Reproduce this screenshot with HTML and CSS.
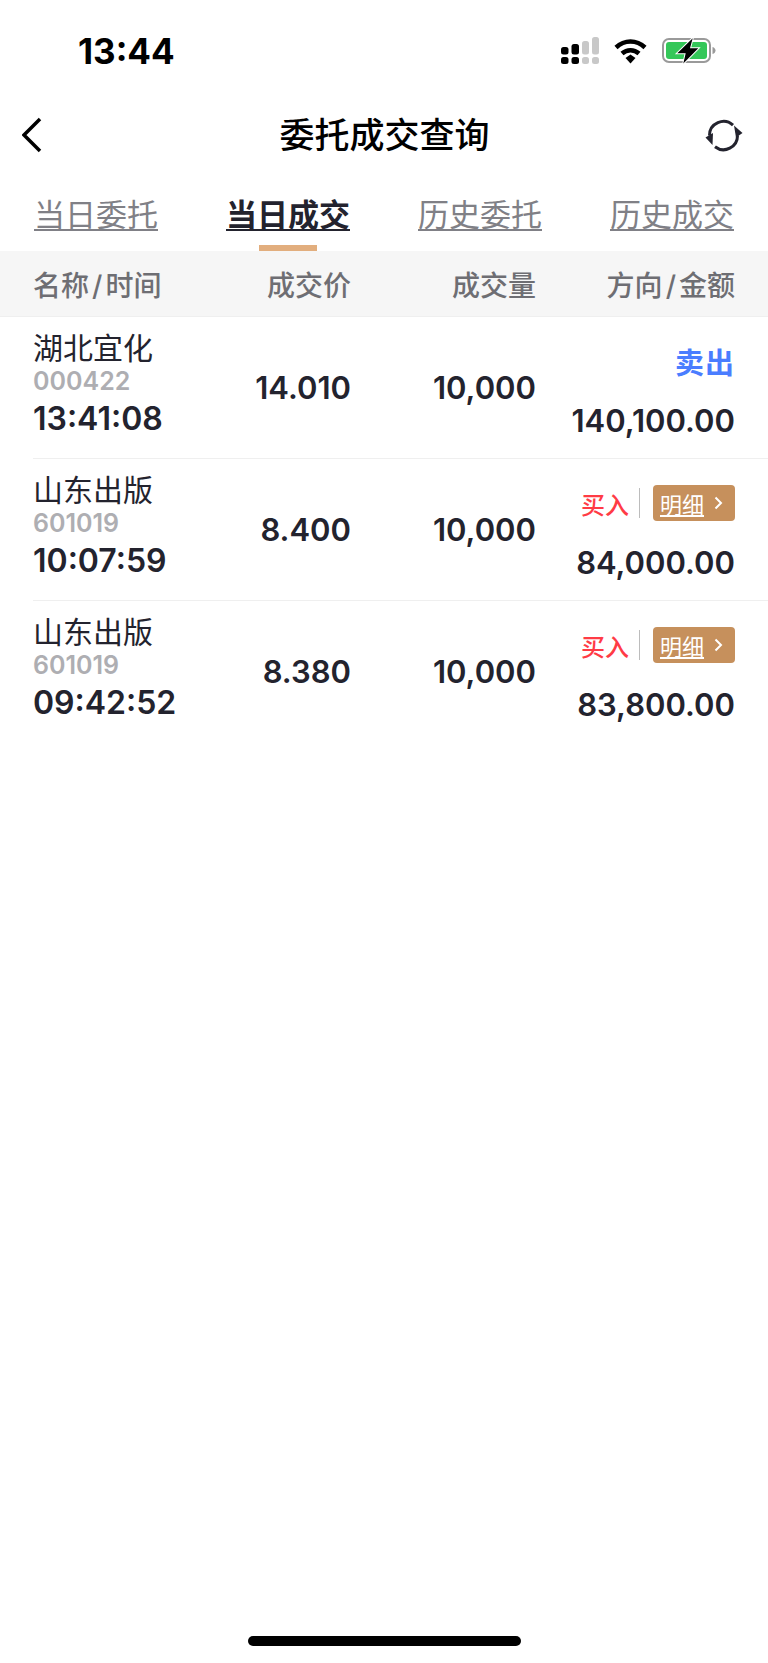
FILE: index.html
```html
<!DOCTYPE html>
<html lang="zh-CN">
<head>
    <meta charset="UTF-8">
    <meta name="viewport" content="width=device-width, initial-scale=1.0">
    <title>委托成交查询</title>
    <link rel="stylesheet" href="styles.css">
</head>
<body>
    <div class="page">
        <!-- Status bar -->
        <div class="status-bar">
            <span class="clock">13:44</span>
            <div class="status-icons">
                <svg class="signal" width="38" height="27" viewBox="0 0 38 27">
                    <g fill="#000">
                        <rect x="0" y="10" width="7.5" height="7.5" rx="2.5"/>
                        <rect x="0" y="20" width="7.5" height="7" rx="2.5"/>
                        <rect x="10.5" y="7" width="7.5" height="10.5" rx="2.5"/>
                        <rect x="10.5" y="20" width="7.5" height="7" rx="2.5"/>
                    </g>
                    <g fill="#c8c8c8">
                        <rect x="21" y="4" width="7" height="13.5" rx="2.5"/>
                        <rect x="21" y="20" width="7" height="7" rx="2.5"/>
                        <rect x="31" y="0" width="7" height="17.5" rx="2.5"/>
                        <rect x="31" y="20" width="7" height="7" rx="2.5"/>
                    </g>
                </svg>
                <svg class="wifi" width="33" height="26" viewBox="0 0 33 26">
                    <path d="M2 9.5C10.500 1.500 22.500 1.500 31 9.500" fill="none" stroke="#000" stroke-width="4.500"/>
                    <path d="M8 15.500C13 11 20 11 25 15.500" fill="none" stroke="#000" stroke-width="4.500"/>
                    <path d="M11.500 20L16.500 16.500L21.500 20L16.500 25.500Z" fill="#000"/>
                </svg>
                <svg class="battery" width="54" height="27" viewBox="0 0 54 27">
                    <rect x="1" y="2" width="47" height="23" rx="6" fill="none" stroke="#9a9a9a" stroke-width="2"/>
                    <rect x="4" y="5" width="41" height="17" rx="3" fill="#34c759"/>
                    <path d="M50.500 10C52.500 10.500 53.500 12 53.500 13.500C53.500 15 52.500 16.500 50.500 17Z" fill="#9a9a9a"/>
                    <path d="M30.700 1.300L15.300 16.300H23.700L21.300 26.500L36.300 11.300H28Z" fill="#000" stroke="#fff" stroke-width="2" paint-order="stroke"/>
                </svg>
            </div>
        </div>

        <!-- Title bar -->
        <div class="nav-bar">
            <svg class="back" width="20" height="36" viewBox="0 0 20 36">
                <path d="M18 2L2 18L18 34" fill="none" stroke="#000" stroke-width="3.500"/>
            </svg>
            <h1 class="title">委托成交查询</h1>
            <svg class="refresh" width="38" height="33" viewBox="0 0 38 33">
                <path d="M4.500 16.500A14 14 0 0 1 28 6.200" fill="none" stroke="#23232e" stroke-width="3"/>
                <path d="M32.500 16.500A14 14 0 0 1 10 27.800" fill="none" stroke="#23232e" stroke-width="3"/>
                <path d="M29 6.500L37.500 14L31 18.500Z" fill="#23232e"/>
                <path d="M0.500 18.500L8 14L7.500 26Z" fill="#23232e"/>
            </svg>
        </div>

        <!-- Tabs -->
        <div class="tabs">
            <div class="tab"><span class="tab-label">当日委托</span></div>
            <div class="tab active"><span class="tab-label">当日成交</span><span class="tab-bar"></span></div>
            <div class="tab"><span class="tab-label">历史委托</span></div>
            <div class="tab"><span class="tab-label">历史成交</span></div>
        </div>

        <!-- Table head -->
        <div class="table-head grid-row">
            <span>名称<span class="slash">/</span>时间</span>
            <span class="num">成交价</span>
            <span class="num">成交量</span>
            <span class="num">方向<span class="slash">/</span>金额</span>
        </div>

        <!-- Trades -->
        <div class="trade-list">
            <div class="trade grid-row">
                <div class="stock">
                    <span class="stock-name">湖北宜化</span>
                    <span class="stock-code">000422</span>
                    <span class="stock-time">13:41:08</span>
                </div>
                <span class="value">14.010</span>
                <span class="value">10,000</span>
                <div class="side">
                    <div class="side-top"><span class="sell">卖出</span></div>
                    <span class="amount">140,100.00</span>
                </div>
            </div>
            <div class="trade grid-row">
                <div class="stock">
                    <span class="stock-name">山东出版</span>
                    <span class="stock-code">601019</span>
                    <span class="stock-time">10:07:59</span>
                </div>
                <span class="value">8.400</span>
                <span class="value">10,000</span>
                <div class="side">
                    <div class="side-top">
                        <span class="buy">买入</span>
                        <span class="side-sep"></span>
                        <span class="detail-btn"><span class="detail-text">明细</span>
                            <svg width="9" height="14" viewBox="0 0 9 14"><path d="M1.500 1.500L7 7L1.500 12.500" fill="none" stroke="#fff" stroke-width="2"/></svg>
                        </span>
                    </div>
                    <span class="amount">84,000.00</span>
                </div>
            </div>
            <div class="trade grid-row">
                <div class="stock">
                    <span class="stock-name">山东出版</span>
                    <span class="stock-code">601019</span>
                    <span class="stock-time">09:42:52</span>
                </div>
                <span class="value">8.380</span>
                <span class="value">10,000</span>
                <div class="side">
                    <div class="side-top">
                        <span class="buy">买入</span>
                        <span class="side-sep"></span>
                        <span class="detail-btn"><span class="detail-text">明细</span>
                            <svg width="9" height="14" viewBox="0 0 9 14"><path d="M1.500 1.500L7 7L1.500 12.500" fill="none" stroke="#fff" stroke-width="2"/></svg>
                        </span>
                    </div>
                    <span class="amount">83,800.00</span>
                </div>
            </div>
        </div>

        <div class="home-indicator"></div>
    </div>
</body>
</html>
```

FILE: styles.css
```css
body {
    margin: 0;
    padding: 0;
    background: #fff;
    font-family: Inter, "Noto Sans CJK SC", sans-serif;
    color: #23232e;
}
.page {
    width: 768px;
    height: 1663px;
    display: flex;
    flex-direction: column;
    overflow: hidden;
}
.status-bar {
    height: 100px;
    display: flex;
    justify-content: space-between;
    align-items: flex-start;
    padding: 0 52px 0 78px;
    box-sizing: border-box;
}
.clock {
    margin-top: 32px;
    font-size: 35px;
    line-height: 38px;
    font-weight: 700;
    color: #000;
}
.status-icons {
    display: flex;
    align-items: flex-start;
    margin-top: 37px;
}
.wifi {
    margin-left: 15px;
    margin-top: 1px;
}
.battery {
    margin-left: 15px;
}
.nav-bar {
    height: 70px;
    display: grid;
    grid-template-columns: 1fr auto 1fr;
    align-items: center;
    padding: 0 25px 0 22px;
}
.refresh {
    justify-self: end;
}
.title {
    margin: 0 0 0 4px;
    font-size: 35px;
    line-height: 46px;
    font-weight: 500;
    color: #000;
}
.tabs {
    height: 81px;
    display: flex;
    justify-content: space-between;
    padding: 0 34px;
}
.tab {
    display: flex;
    flex-direction: column;
    align-items: center;
    justify-content: flex-end;
    height: 81px;
}
.tab-label {
    font-size: 31px;
    line-height: 40px;
    margin-bottom: 16px;
    color: #808086;
    text-decoration: underline;
    text-decoration-thickness: 2px;
    text-underline-offset: 3px;
}
.tab.active .tab-label {
    font-weight: 700;
    color: #23232e;
    margin-bottom: 10px;
}
.tab-bar {
    display: block;
    width: 58px;
    height: 6px;
    background: #e2ae7e;
}
.grid-row {
    display: grid;
    grid-template-columns: 151px 167px 185px 199px;
    align-items: center;
    padding-left: 33px;
}
.table-head {
    height: 65px;
    background: #f6f6f6;
    border-bottom: 1px solid #efefef;
    font-size: 28px;
    font-weight: 500;
    color: #6e6e73;
    white-space: nowrap;
}
.slash {
    padding: 0 3px;
}
.num {
    text-align: right;
}
.trade {
    height: 141px;
    border-bottom: 1px solid #efefef;
    margin-left: 33px;
    padding-left: 0;
}
.trade:last-child {
    border-bottom: none;
}
.stock {
    display: flex;
    flex-direction: column;
    white-space: nowrap;
    padding-bottom: 3px;
}
.stock-name {
    font-size: 30px;
    line-height: 38px;
    font-weight: 400;
}
.stock-code {
    font-size: 25px;
    line-height: 28px;
    font-weight: 600;
    color: #aeaeb2;
}
.stock-time {
    font-size: 32px;
    line-height: 48px;
    font-weight: 600;
}
.value {
    text-align: right;
    font-size: 31px;
    font-weight: 600;
}
.side {
    display: flex;
    flex-direction: column;
    align-items: flex-end;
    padding-top: 7px;
}
.side-top {
    height: 36px;
    display: flex;
    align-items: center;
    margin-bottom: 24px;
}
.sell {
    font-size: 29px;
    font-weight: 700;
    letter-spacing: 1px;
    color: #4a7dff;
}
.buy {
    font-size: 24px;
    font-weight: 500;
    color: #ff3b45;
}
.side-sep {
    width: 1px;
    height: 30px;
    margin: 0 13px 0 10px;
    background: #bcbcbc;
}
.detail-btn {
    width: 82px;
    height: 36px;
    box-sizing: border-box;
    padding: 0 12px 0 7px;
    display: flex;
    justify-content: space-between;
    align-items: center;
    background: #c6905c;
    border-radius: 4px;
    color: #fff;
    font-size: 22px;
}
.detail-text {
    text-decoration: underline;
}
.amount {
    font-size: 31px;
    line-height: 36px;
    font-weight: 600;
}
.home-indicator {
    width: 273px;
    height: 10px;
    margin: auto 0 17px 248px;
    background: #000;
    border-radius: 5px;
}
```
